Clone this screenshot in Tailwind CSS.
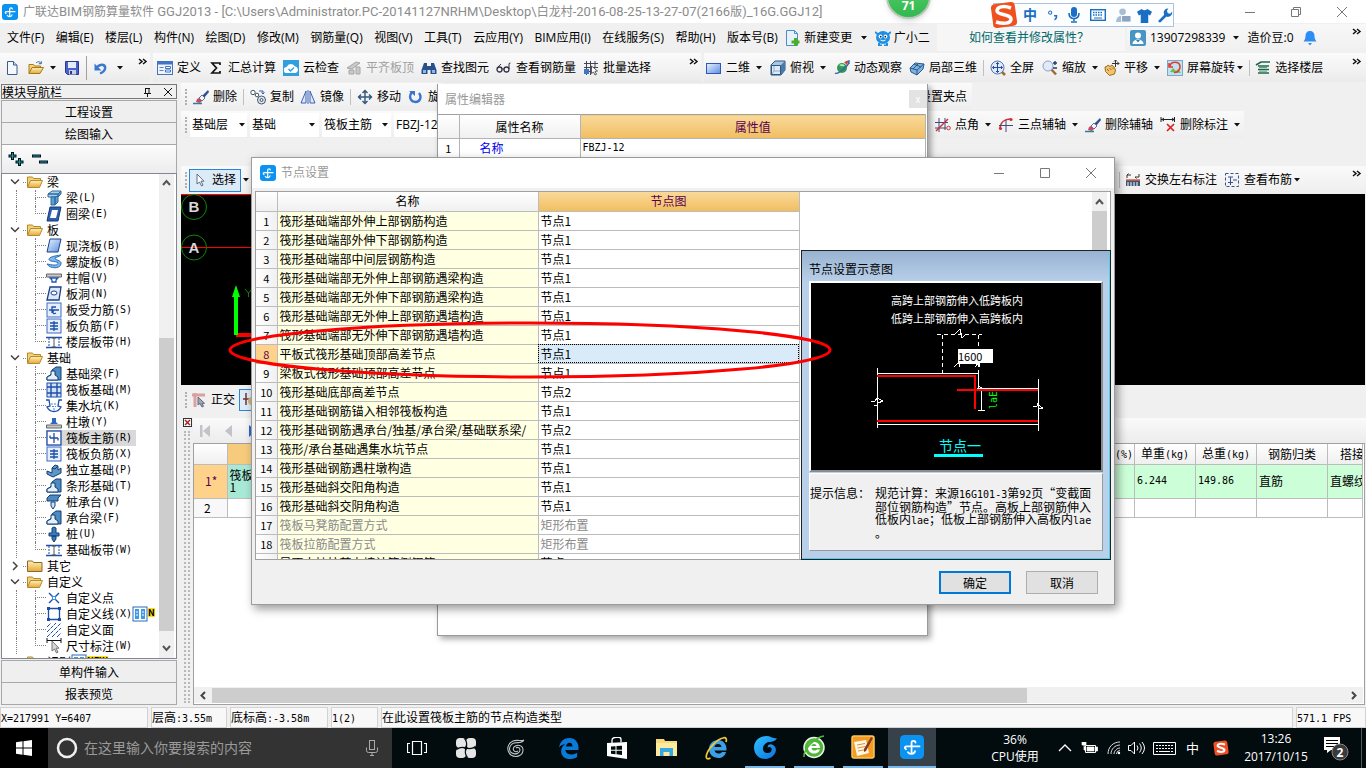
<!DOCTYPE html>
<html lang="zh-CN">
<head>
<meta charset="utf-8">
<title>广联达BIM钢筋算量软件 GGJ2013</title>
<script src="https://cdn.jsdelivr.net/npm/@tailwindcss/browser@4"></script>
</head>
<body class="h-screen overflow-hidden bg-[#f0f0f0] font-['Open_Sans','Noto_Sans_CJK_SC',sans-serif] text-[12px] leading-4 text-black">

<svg class="absolute size-0" aria-hidden="true">
  <defs>
    <linearGradient id="gBlue" x1="0" y1="0" x2="1" y2="1"><stop offset="0" stop-color="#eaf3ff"/><stop offset="1" stop-color="#5b8fe0"/></linearGradient>
    <linearGradient id="gFold" x1="0" y1="0" x2="0" y2="1"><stop offset="0" stop-color="#fff0b4"/><stop offset="1" stop-color="#e3a93c"/></linearGradient>
    <linearGradient id="gOrb" x1="0" y1="0" x2="1" y2="1"><stop offset="0" stop-color="#2ec3ff"/><stop offset="1" stop-color="#0c6fe0"/></linearGradient>
  </defs>
  <symbol id="app" viewBox="0 0 16 16"><rect width="16" height="16" rx="3" fill="#0c93f2"/><path d="M10.300 5C10.300 3.600 7.700 3.300 7.700 5.200V12.500M4 9.500C2.600 8.600 3.200 7.600 4.600 7.600H13M5.300 11.500C6.300 13 9.500 13 10 10.800" fill="none" stroke="#fff" stroke-width="1.200" stroke-linecap="round"/></symbol>
  <symbol id="new" viewBox="0 0 16 16"><path d="M3.500 1.500h6l3.500 3.500v9.500H3.500z" fill="#f4f9ff" stroke="#3f5c86"/><path d="M9.500 1.500V5H13" fill="#c9dcf5" stroke="#3f5c86"/></symbol>
  <symbol id="open" viewBox="0 0 16 16"><path d="M1 13.500v-9h4.500l1 1.500h6v2" fill="#f6d47a" stroke="#a57a1c"/><path d="M1 13.500l3-6h11.500l-3.500 6z" fill="url(#gFold)" stroke="#a57a1c"/><path d="M8 3c2-2 4-1.500 5 .5m.3-2.300v2.500h-2.500" fill="none" stroke="#3a68a8"/></symbol>
  <symbol id="save" viewBox="0 0 16 16"><path d="M1.500 1.500h13v13h-11l-2-2z" fill="#4a62c8" stroke="#283a90"/><path d="M4 2h8v6H4z" fill="#e6ecfa"/><path d="M5 10h7v4.500H5z" fill="#c9cfe4"/><path d="M6 11h2v3H6z" fill="#283a90"/></symbol>
  <symbol id="undo" viewBox="0 0 16 16"><path d="M4 7c5-4 9-2 8 2-.5 2-2.500 3.500-5 4.500" fill="none" stroke="#3b78d0" stroke-width="2.400"/><path d="M1.500 3.500v7h7z" fill="#3b78d0"/></symbol>
  <symbol id="define" viewBox="0 0 16 16"><rect x=".5" y="1.500" width="15" height="13" fill="#eef4fc" stroke="#4774b8"/><path d="M1 2h14v2.500H1z" fill="#3f74c6"/><path d="M2.500 7.500h4m-4 3h4" stroke="#6b84a8"/><path d="M8.500 6.500h5v2h-5zm0 3.500h5v2h-5z" fill="#fff" stroke="#3f74c6"/></symbol>
  <symbol id="sigma" viewBox="0 0 16 16"><path d="M12 5V3H4l4.500 5L4 13h8v-2" fill="none" stroke="#111" stroke-width="1.700"/></symbol>
  <symbol id="cloud" viewBox="0 0 16 16"><rect width="16" height="16" fill="#2f9fe0"/><path d="M4 13a3 3 0 0 1-.3-6A4.500 4.500 0 0 1 12 6.500a3.300 3.300 0 0 1 .3 6.500z" fill="#fff"/><path d="M5.500 9l2 2 3.500-3.500" fill="none" stroke="#2f9fe0" stroke-width="1.400"/></symbol>
  <symbol id="align" viewBox="0 0 16 16"><path d="M1 8l9-6 4 1-8 6zM3 10h5v4H3zM10 7h4v7h-4z" fill="#c9c9c9" stroke="#a6a6a6"/></symbol>
  <symbol id="binoc" viewBox="0 0 16 16"><path d="M3 3h3v3h4V3h3l2.500 7v4H9.500v-4h-3v4H.5v-4z" fill="#28508c"/><path d="M2 10h3v3H2zm9 0h3v3h-3z" fill="#8fb6e8"/></symbol>
  <symbol id="glasses" viewBox="0 0 16 16"><circle cx="3.500" cy="9.500" r="2.500" fill="none" stroke="#334" stroke-width="1.300"/><circle cx="10.500" cy="9.500" r="2.500" fill="none" stroke="#334" stroke-width="1.300"/><path d="M6 9h2M1 8l4-4M13 9V3.500l1.500-.5" stroke="#334" fill="none"/></symbol>
  <symbol id="batch" viewBox="0 0 16 16"><path d="M1 3.500h14M1 7.500h14M1 11.500h7M3.500 1v14M7.500 1v14M12 1v6" stroke="#445"/><path d="M1 9h5v5H1z" fill="#3f74c6"/><path d="M8.500 6l6 5-2.500.3 1.500 3-1.500.7-1.500-3-2 1.500z" fill="#fff" stroke="#333" stroke-width=".8"/></symbol>
  <symbol id="rect" viewBox="0 0 16 16"><rect x=".5" y="3.500" width="14" height="10" fill="url(#gBlue)" stroke="#3156b8"/></symbol>
  <symbol id="cube" viewBox="0 0 16 16"><path d="M1 5l4-4h10v9l-4 5H1z" fill="#a9c6e4" stroke="#2f587f"/><path d="M11 5l4-4v9l-4 5z" fill="#4b7aa8"/><path d="M1.500 5.500h9v9h-9z" fill="#dceafa" stroke="#2f587f"/><path d="M4 6v5h6M4 11l-2 3" fill="none" stroke="#8fb0d0"/></symbol>
  <symbol id="orbit" viewBox="0 0 16 16"><circle cx="8" cy="8" r="5" fill="#2f9a54"/><path d="M5 5c3-2 5-1 6 1-2 0-4 1-6-1z" fill="#a9e6b8"/><path d="M1 13C3 15 14 7 15 2m-3 0l3-1v3" fill="none" stroke="#3a68a8" stroke-width="1.400"/><path d="M10 2l4-1-1 4z" fill="#d23a2a"/></symbol>
  <symbol id="local3d" viewBox="0 0 16 16"><path d="M1 8l5-5 9 1-1 5-6 6-6-3z" fill="#7fb2dc" stroke="#285a8c"/><path d="M1 8l7 2 7-6M8 10v5M5 4l7 3M4 9l5-5" stroke="#285a8c" fill="none"/></symbol>
  <symbol id="full" viewBox="0 0 16 16"><path d="M11 11l4 4" stroke="#a46a35" stroke-width="2.500"/><circle cx="7.500" cy="7.500" r="6.500" fill="#dfeafb" stroke="#5878ac"/><path d="M7.500 2.500v10M2.500 7.500h10M6 4l1.500-1.500L9 4M6 11l1.500 1.500L9 11M4 6L2.500 7.500 4 9M11 6l1.500 1.500L11 9" stroke="#2c4a9c" fill="none"/></symbol>
  <symbol id="zoomi" viewBox="0 0 16 16"><path d="M9 9l5 5.500" stroke="#a46a35" stroke-width="2.500"/><circle cx="6" cy="6" r="5" fill="#dfeafb" stroke="#8aa3c8"/><path d="M13 1v4M11 3h4M11 8h4" stroke="#223c70" stroke-width="1.400"/></symbol>
  <symbol id="pan" viewBox="0 0 16 16"><path d="M1 7l2-.5L4 5l2 1.500L8 5l2 2 1.500 3-1 4-5 1.500-4-4z" fill="#f1c36c" stroke="#9a6b21"/><path d="M3 9l2 2M5.500 8l2 2M8 7.500l1.500 1.500" stroke="#9a6b21"/><path d="M11.500 0v7M8 3.500h7M10 1.500L11.500 0 13 1.500M13.500 2L15 3.500 13.500 5" stroke="#333" fill="none"/></symbol>
  <symbol id="rot" viewBox="0 0 16 16"><rect x=".5" y=".5" width="15" height="15" fill="#bfe3f5" stroke="#78a9c8"/><path d="M3 12l3-4 3 3 2-2 3 4z" fill="#77b84c"/><path d="M3 6c1-5 9-5 10 0 .5 4-3 7-6 6.500M2 3v4h4" fill="none" stroke="#e23b2e" stroke-width="1.500"/></symbol>
  <symbol id="floors" viewBox="0 0 16 16"><path d="M1 5l5-3h9M3 6h11M3 9.500h11M3 13h11" stroke="#26634f" stroke-width="1.700" fill="none"/><path d="M4 7.500h8M4 11.200h8" stroke="#4fae7a"/></symbol>
  <symbol id="brush" viewBox="0 0 16 16"><path d="M15 1l-6 6 2 2 5-6z" fill="#2e4f90"/><path d="M9 6l3 3-3 3-3-3z" fill="#f0f3f9" stroke="#5f7199"/><path d="M6 9l3 3-2 2-4-1 1-3z" fill="#c9485c"/><path d="M0 14.500h9" stroke="#2e7d9c" stroke-width="1.500"/></symbol>
  <symbol id="copy" viewBox="0 0 16 16"><circle cx="3" cy="3.500" r="2.200" fill="#fff" stroke="#456"/><circle cx="7" cy="6" r="1.800" fill="#fff" stroke="#456"/><circle cx="11.500" cy="11" r="4" fill="#e2e9f4" stroke="#456"/><circle cx="11.500" cy="11" r="1.500" fill="none" stroke="#456"/><path d="M9 2h4v3m-1.500-1.500L13 5l1.500-1.500" fill="none" stroke="#2c5fb0"/></symbol>
  <symbol id="mirror" viewBox="0 0 16 16"><path d="M6 2v12H1zM10 2v12h5z" fill="#dbe8fb" stroke="#3a63b4"/><path d="M8 1v14" stroke="#3a63b4"/></symbol>
  <symbol id="move" viewBox="0 0 16 16"><path d="M8 1.500v13M1.500 8h13M5.500 4L8 1.500 10.500 4M5.500 12L8 14.500 10.500 12M4 5.500L1.500 8 4 10.500M12 5.500L14.500 8 12 10.500" fill="none" stroke="#33567f" stroke-width="1.400"/></symbol>
  <symbol id="rotate" viewBox="0 0 16 16"><path d="M4 3C0 8 3 13 7.500 13S14 8 11 4" fill="none" stroke="#3a73d0" stroke-width="2.400"/><path d="M1 2h6v5z" fill="#3a73d0"/></symbol>
  <symbol id="cursor" viewBox="0 0 16 16"><path d="M5 2v10l2.500-2 2 4 1.500-.8-2-4h3z" fill="#fff" stroke="#5c6f86"/></symbol>
  <symbol id="ptang" viewBox="0 0 16 16"><path d="M4 1v14M10 1v12M0 5.500h13M0 11h11" stroke="#3a4a7c"/><path d="M1 14L13 2" stroke="#d23030" stroke-width="1.400"/><circle cx="13.500" cy="11" r="1.800" fill="none" stroke="#d23030"/></symbol>
  <symbol id="pt3" viewBox="0 0 16 16"><path d="M2 12C2 6 6 2 13 2" fill="none" stroke="#d23030" stroke-width="1.500"/><path d="M8 3v12M1 8.500h14" stroke="#3a4a7c"/><circle cx="2.500" cy="11.500" r="1.600" fill="#d23030"/><circle cx="13" cy="2.500" r="1.600" fill="#d23030"/></symbol>
  <symbol id="deldim" viewBox="0 0 16 16"><path d="M1 0v5M14.500 0v5M1 2.500h13M4 1L2 2.500 4 4M12 1l2 1.500L12 4" stroke="#222" fill="none"/><path d="M7 7l7 7M14 7l-7 7" stroke="#e02020" stroke-width="1.700"/></symbol>
  <symbol id="swap" viewBox="0 0 16 16"><path d="M2 6V3h4M3.500 1.500L2 3M14 2v3h-4m1.500 1.500L10 5" fill="none" stroke="#333"/><path d="M1 8h14v6H1z" fill="#3a5578"/><path d="M3 10v4m3-4v4m3-4v4m3-4v4" stroke="#fff"/><path d="M1 8h14" stroke="#e0603c" stroke-width="1.500"/></symbol>
  <symbol id="viewbar" viewBox="0 0 16 16"><path d="M1.500 1.500h13v13h-13z" fill="none" stroke="#345098" stroke-dasharray="3 2"/><path d="M4 5h5M4 10.500h5M6.500 5v8M9 8h4" stroke="#345098" fill="none"/></symbol>
  <symbol id="ortho" viewBox="0 0 16 16"><path d="M1 3h13M4 1v14" stroke="#dca0a0" stroke-width="3"/><path d="M7 5v8l2-1.500L11 15l1.500-.7-1.500-3h2.500z" fill="#9aa8b8" stroke="#667"/></symbol>
  <symbol id="newchg" viewBox="0 0 16 16"><path d="M1.500.5h8l3 3v12h-11z" fill="#e6f1fb" stroke="#4a8fc8"/><path d="M9.500.5v3h3" fill="none" stroke="#4a8fc8"/><path d="M10.500 8v8M6.500 12h8" stroke="#4caf1f" stroke-width="3"/></symbol>
  <symbol id="bot" viewBox="0 0 16 16"><ellipse cx="8" cy="7.500" rx="7" ry="6.500" fill="#1f8fe6"/><path d="M0 2l4 3M16 2l-4 3M4 13v2.500h3M12 13v2.500H9" stroke="#1f8fe6" stroke-width="2" fill="none"/><circle cx="5.500" cy="6.500" r="1.900" fill="#fff"/><circle cx="10.500" cy="6.500" r="1.900" fill="#fff"/><circle cx="5.700" cy="6.700" r=".9" fill="#123"/><circle cx="10.300" cy="6.700" r=".9" fill="#123"/><path d="M5.500 10q2.500 2 5 0" stroke="#fff" fill="none"/></symbol>
  <symbol id="user" viewBox="0 0 16 16"><rect width="16" height="16" rx="2" fill="#4596c4"/><circle cx="8" cy="5.500" r="3" fill="#fff"/><path d="M2.500 14c0-6 11-6 11 0z" fill="#fff"/><path d="M6 10h4l-2 2.500z" fill="#2f78b0"/></symbol>
  <symbol id="bell" viewBox="0 0 16 16"><path d="M8 1c-3 0-4.500 2-4.500 5 0 3-1 4-2 5.500h13c-1-1.500-2-2.500-2-5.500 0-3-1.500-5-4.500-5z" fill="#2e8cf5"/><path d="M6 13h4l-2 2.500z" fill="#2e8cf5"/></symbol>
  <symbol id="dd" viewBox="0 0 6 4"><path d="M0 0h6L3 3.500z" fill="#111"/></symbol>
  <symbol id="chev" viewBox="0 0 10 8"><path d="M1 1l3 2.500L1 6M5 1l3 2.500L5 6" fill="none" stroke="#111" stroke-width="1.500"/></symbol>

  <symbol id="fopen" viewBox="0 0 16 16"><path d="M.5 13V3h5l1 1.500h7V7" fill="#f3d27c" stroke="#b58a2c"/><path d="M.5 13.500L3.500 6.500h12l-3 7z" fill="url(#gFold)" stroke="#b58a2c"/></symbol>
  <symbol id="fclosed" viewBox="0 0 16 16"><path d="M.5 13.500V3h5l1 1.500h8.500v9z" fill="url(#gFold)" stroke="#8a6a24"/></symbol>
  <symbol id="t-beam" viewBox="0 0 16 16"><path d="M2 4l4-3h9l-3 3zM2 4h10v3H2z" fill="#a8d2ec" stroke="#2a6aa0"/><path d="M5 7h4v8H5zM12 4l3-3v3l-3 3zM9 7l3-1v6l-3 3z" fill="#5d9fd0" stroke="#2a6aa0"/></symbol>
  <symbol id="t-ring" viewBox="0 0 16 16"><path d="M4 1h11l-3 14H1z" fill="#2e5fae" stroke="#16397a"/><path d="M6 4h6l-2 8H4z" fill="#fff"/></symbol>
  <symbol id="t-slab" viewBox="0 0 16 16"><path d="M4 1h11l-3 13H1z" fill="url(#gBlue)" stroke="#1c3f88"/></symbol>
  <symbol id="t-spiral" viewBox="0 0 16 16"><path d="M15 1C8 2 3 3 3 5.500S13 7 12 9.500 6 11 1 10c3 5 13 5 14 0 1-4-7-4-6-6 1-1 4-1 6-3z" fill="#7fb8ea" stroke="#2a6ab8"/></symbol>
  <symbol id="t-cap" viewBox="0 0 16 16"><path d="M.5 4h15v3H.5z" fill="#c8c8c8" stroke="#666"/><path d="M4 8h8l-2 2v2H6v-2z" fill="#fff" stroke="#2456b0" stroke-width="1.300"/></symbol>
  <symbol id="t-hole" viewBox="0 0 16 16"><path d="M4 1h11l-2 13H1z" fill="#dce9fc" stroke="#1c3f88" stroke-width="1.300"/><ellipse cx="8" cy="7" rx="3" ry="2" fill="#fff" stroke="#1c3f88"/></symbol>
  <symbol id="t-bars" viewBox="0 0 16 16"><rect x="1" y="1" width="14" height="14" fill="#e4eefc" stroke="#3c6cc0"/><path d="M3 8h10M6 11V5h4M10 11c-3 2-4-1-2-3" fill="none" stroke="#1c4ea8" stroke-width="1.300"/></symbol>
  <symbol id="t-neg" viewBox="0 0 16 16"><rect x="1" y="1" width="14" height="14" fill="#e4eefc" stroke="#3c6cc0"/><path d="M4 5h8M4 11h8M8 3v10M4 8h8" fill="none" stroke="#1c4ea8" stroke-width="1.300"/></symbol>
  <symbol id="t-band" viewBox="0 0 16 16"><path d="M0 3.500h16M0 13.500h16" stroke="#1c4ea8" stroke-width="1.400"/><path d="M3 4v9M13 4v9" stroke="#1c4ea8" stroke-dasharray="2 1"/><path d="M6 4h4M8 4v9M6 13h4" stroke="#555"/></symbol>
  <symbol id="t-fbeam" viewBox="0 0 16 16"><path d="M1 14V11l5-3V4l4-3h5v13z" fill="#4c8abf" stroke="#123f78"/><path d="M1 14v-3l4-2V5h4v4l3 2v3z" fill="#e6f0fb" stroke="#123f78"/></symbol>
  <symbol id="t-raft" viewBox="0 0 16 16"><rect x="1" y="1" width="14" height="14" fill="#cfe0f8" stroke="#1c4ea8"/><path d="M5 1v14M11 1v14M1 5h14M1 11h14" stroke="#1c4ea8" stroke-width="1.400"/></symbol>
  <symbol id="t-pit" viewBox="0 0 16 16"><path d="M0 2h3l1 6-3 1c3 6 11 6 14 0l-3-1 1-6h3" fill="none" stroke="#1c4ea8" stroke-width="1.300"/><path d="M5 6h6M6 8.500h4M7 11h2" stroke="#3c8ad8" stroke-dasharray="2 1"/></symbol>
  <symbol id="t-pier" viewBox="0 0 16 16"><path d="M.5 11h15v3H.5z" fill="#c8c8c8" stroke="#666"/><path d="M4 10l2-2V4h4v4l2 2z" fill="#2f66c0"/></symbol>
  <symbol id="t-main" viewBox="0 0 16 16"><rect x="1" y="1" width="14" height="14" fill="#fff" stroke="#1c4ea8" stroke-width="1.300"/><path d="M8 3v10M4 8h8M4 5.500V8M12 8v2.500" stroke="#1c4ea8" stroke-width="1.300"/></symbol>
  <symbol id="t-iso" viewBox="0 0 16 16"><path d="M1 9l5 2V6l3-3 3 1v4l3-2v5l-8 4-6-3z" fill="#5f97c8" stroke="#123f78"/><path d="M6 6l3 1 3-3" stroke="#123f78" fill="none"/></symbol>
  <symbol id="t-pcap" viewBox="0 0 16 16"><path d="M1 4l3-3h11l-3 3v3H1z" fill="#4c8abf" stroke="#123f78"/><path d="M5 8h4v4l-2 3-2-3z" fill="#cfe3f6" stroke="#123f78"/></symbol>
  <symbol id="t-pile" viewBox="0 0 16 16"><path d="M6 2l2-1 2 1v5h3v3H3V7h3zM6 10h4v3l-2 3-2-3z" fill="#3d7ab8" stroke="#123f78"/></symbol>
  <symbol id="t-point" viewBox="0 0 16 16"><path d="M3 3l10 10M13 3L3 13" stroke="#1c4ea8" stroke-width="1.400"/><rect x="6.500" y="6.500" width="3" height="3" fill="#fff" stroke="#3c8ad8"/></symbol>
  <symbol id="t-line" viewBox="0 0 16 16"><path d="M2.500 2.500h11v11h-11z" fill="none" stroke="#1c4ea8" stroke-width="1.300"/><path d="M1 1h3v3H1zM12 1h3v3h-3zM1 12h3v3H1zM12 12h3v3h-3z" fill="#1c4ea8"/></symbol>
  <symbol id="t-hatch" viewBox="0 0 16 16"><path d="M1 5l4-4M1 10l9-9M1 15L15 1M6 15l9-9M11 15l4-4" stroke="#1c4ea8" stroke-dasharray="4 1"/></symbol>
  <symbol id="t-dim" viewBox="0 0 16 16"><path d="M1 0v5M15 0v5M1 2.500h14" stroke="#111"/><path d="M6 3v10l2.500-2 2 4 1.500-.8-2-4h3z" fill="#d8d8d8" stroke="#777"/></symbol>
  <symbol id="book" viewBox="0 0 16 16"><rect x="1" y="1" width="14" height="14" fill="#fff" stroke="#2a6ab8"/><path d="M3 3h4v10H3zM9 3h4v10H9z" fill="#3c9ae8"/><path d="M4 6h2m-2 3h2m4-3h2m-2 3h2" stroke="#fff"/></symbol>
</svg>

<div class="relative flex h-full flex-col overflow-hidden">

  <!-- title bar -->
  <header class="flex h-[23px] shrink-0 items-center bg-white pl-[2px] text-[#8c8c8c]">
    <svg class="mr-[5px] size-4"><use href="#app"/></svg>
    <h1 class="whitespace-nowrap font-[Roboto,'Noto_Sans_CJK_SC',sans-serif] text-[13px]"><span class="text-[12px]">广联达</span>BIM<span class="text-[12px]">钢筋算量软件</span> GGJ2013 - [C:\Users\Administrator.PC-20141127NRHM\Desktop\<span class="text-[12px]">白龙村</span>-2016-08-25-13-27-07(2166<span class="text-[12px]">版</span>)_16G.GGJ12]</h1>
    <div class="ml-auto flex gap-9 pr-[19px]">
      <button aria-label="最小化"><svg class="size-[10px]" viewBox="0 0 10 10"><path d="M0 5.500h10" stroke="#777"/></svg></button>
      <button aria-label="还原"><svg class="size-[10px]" viewBox="0 0 10 10"><path d="M.5 2.500h7v7h-7zM2.500 2.500v-2h7v7h-2" fill="none" stroke="#777"/></svg></button>
      <button aria-label="关闭"><svg class="size-[10px]" viewBox="0 0 10 10"><path d="M0 0l10 10M10 0L0 10" stroke="#777"/></svg></button>
    </div>
  </header>

  <!-- menu bar -->
  <div class="flex h-[29px] shrink-0 items-center">
    <nav class="flex w-[930px] shrink-0 items-center justify-between whitespace-nowrap pl-[7px]">
      <button>文件(F)</button><button>编辑(E)</button><button>楼层(L)</button><button>构件(N)</button><button>绘图(D)</button><button>修改(M)</button><button>钢筋量(Q)</button><button>视图(V)</button><button>工具(T)</button><button>云应用(Y)</button><button>BIM应用(I)</button><button>在线服务(S)</button><button>帮助(H)</button><button class="-mr-1">版本号(B)</button>
      <button class="-mr-1 flex items-center gap-[3px]"><svg class="size-4"><use href="#newchg"/></svg>新建变更<svg class="ml-[6px] h-1 w-[6px]"><use href="#dd"/></svg></button>
      <button class="flex items-center gap-[3px]"><svg class="size-4"><use href="#bot"/></svg>广小二</button>
    </nav>
    <a href="#" class="ml-[7px] flex h-[27px] w-[188px] shrink-0 items-center bg-[#f6f6f6] pl-8 text-[#00696b]">如何查看并修改属性？</a>
    <div class="ml-[2px] flex h-[27px] flex-1 items-center bg-linear-to-b from-[#f8f8f8] to-[#f0f0f0] pl-[3px]">
      <svg class="mr-1 size-4"><use href="#user"/></svg><button class="flex items-center">13907298339<svg class="ml-2 h-1 w-[6px]"><use href="#dd"/></svg></button>
      <span class="ml-2">造价豆:0</span><svg class="ml-2 size-4"><use href="#bell"/></svg>
      <svg class="mb-3 mr-[4px] ml-auto h-2 w-[10px]"><use href="#chev"/></svg>
    </div>
  </div>

  <!-- main toolbar -->
  <div class="flex h-[31px] shrink-0 items-center gap-[3px] whitespace-nowrap">
    <div class="flex h-[29px] w-[150px] shrink-0 items-center bg-linear-to-b from-[#fbfbfb] to-[#ebebeb] pl-1">
      <button aria-label="新建"><svg class="size-4"><use href="#new"/></svg></button>
      <button aria-label="打开" class="ml-2 flex items-center"><svg class="size-4"><use href="#open"/></svg><svg class="ml-[6px] h-1 w-[6px]"><use href="#dd"/></svg></button>
      <button aria-label="保存" class="ml-2"><svg class="size-4"><use href="#save"/></svg></button>
      <span class="ml-[6px] h-6 w-px bg-[#a0a0a0]"></span>
      <button aria-label="撤销" class="ml-[6px] flex items-center"><svg class="size-4"><use href="#undo"/></svg><svg class="ml-2 h-1 w-[6px]"><use href="#dd"/></svg></button>
      <svg class="mb-3 ml-auto mr-[2px] h-2 w-[10px]"><use href="#chev"/></svg>
    </div>
    <div class="flex h-[29px] w-[548px] shrink-0 items-center gap-[7px] bg-linear-to-b from-[#fbfbfb] to-[#ebebeb] pl-1">
      <button class="flex items-center gap-1"><svg class="size-4"><use href="#define"/></svg>定义</button>
      <button class="flex items-center gap-1"><svg class="size-4"><use href="#sigma"/></svg>汇总计算</button>
      <button class="flex items-center gap-1"><svg class="size-4"><use href="#cloud"/></svg>云检查</button>
      <button class="flex items-center gap-1 text-[#a0a0a0]"><svg class="size-4"><use href="#align"/></svg>平齐板顶</button>
      <button class="flex items-center gap-1"><svg class="size-4"><use href="#binoc"/></svg>查找图元</button>
      <button class="flex items-center gap-1"><svg class="size-4"><use href="#glasses"/></svg>查看钢筋量</button>
      <button class="flex items-center gap-1"><svg class="size-4"><use href="#batch"/></svg>批量选择</button>
      <svg class="mb-3 ml-auto mr-[2px] h-2 w-[10px]"><use href="#chev"/></svg>
    </div>
    <div class="flex h-[29px] flex-1 items-center gap-2 bg-linear-to-b from-[#fbfbfb] to-[#ebebeb] pl-[2px]">
      <button class="flex items-center gap-1"><svg class="size-4"><use href="#rect"/></svg>二维<svg class="ml-[2px] h-1 w-[6px]"><use href="#dd"/></svg></button>
      <button class="flex items-center gap-1"><svg class="size-4"><use href="#cube"/></svg>俯视<svg class="ml-[2px] h-1 w-[6px]"><use href="#dd"/></svg></button>
      <button class="flex items-center gap-1"><svg class="size-4"><use href="#orbit"/></svg>动态观察</button>
      <button class="-ml-px flex items-center gap-1"><svg class="size-4"><use href="#local3d"/></svg>局部三维</button>
      <span class="-mx-[2px] h-4 w-px bg-[#c0c0c0]"></span>
      <button class="flex items-center gap-1"><svg class="size-4"><use href="#full"/></svg>全屏</button>
      <button class="flex items-center gap-1"><svg class="size-4"><use href="#zoomi"/></svg>缩放<svg class="ml-[2px] h-1 w-[6px]"><use href="#dd"/></svg></button>
      <button class="-ml-[2px] flex items-center gap-1"><svg class="size-4"><use href="#pan"/></svg>平移<svg class="ml-[2px] h-1 w-[6px]"><use href="#dd"/></svg></button>
      <button class="-ml-px flex items-center gap-1"><svg class="size-4"><use href="#rot"/></svg>屏幕旋转<svg class="-ml-[2px] h-1 w-[6px]"><use href="#dd"/></svg></button>
      <span class="-mx-[2px] h-4 w-px bg-[#c0c0c0]"></span>
      <button class="-ml-px flex items-center gap-1"><svg class="size-4"><use href="#floors"/></svg>选择楼层</button>
      <svg class="mb-3 ml-auto mr-[4px] h-2 w-[10px]"><use href="#chev"/></svg>
    </div>
  </div>

  <div class="flex min-h-0 flex-1">
    <!-- module navigation -->
    <aside class="flex w-[177px] shrink-0 flex-col pl-px pt-px font-['Noto_Sans_CJK_SC',sans-serif]">
      <div class="flex h-[15px] shrink-0 items-center border border-[#777] leading-3"><span>模块导航栏</span>
        <button aria-label="固定" class="ml-auto mr-3"><svg class="h-[10px] w-[9px]" viewBox="0 0 9 10"><path d="M2.500 1v5M6 1v5M1 6.500h7M4.500 7v3M2 1.500h5" stroke="#111" fill="none"/></svg></button>
        <button aria-label="关闭" class="mr-1"><svg class="size-2" viewBox="0 0 8 8"><path d="M0 0l8 8M8 0L0 8" stroke="#111"/></svg></button>
      </div>
      <button class="mt-px h-[23px] shrink-0 border border-[#a8a8a8] bg-[#efefef]">工程设置</button>
      <button class="-mt-px h-[23px] shrink-0 border border-[#a8a8a8] bg-[#efefef]">绘图输入</button>
      <div class="flex h-[28px] shrink-0 items-center gap-2 border-x border-[#a8a8a8] bg-linear-to-b from-[#fcfcfc] to-[#ececec] pl-[6px]">
        <button aria-label="全部展开"><svg class="size-4" viewBox="0 0 16 16"><path d="M4.500 1v8M.5 5h8M11.500 7v8M7.500 11h8" stroke="#012" stroke-width="3"/><path d="M4.500 2v6M1.500 5h6M11.500 8v6M8.500 11h6" stroke="#1a9a96"/></svg></button>
        <button aria-label="全部折叠"><svg class="size-4" viewBox="0 0 16 16"><path d="M0 5h9M7 11h9" stroke="#012" stroke-width="3"/><path d="M1 5h7M8 11h7" stroke="#1a9a96"/></svg></button>
      </div>
      <div class="flex min-h-0 flex-1 border border-[#828790] bg-white">
        <ul id="tree" class="min-w-0 flex-1 overflow-hidden pl-[2px]"></ul>
        <div class="mr-[2px] flex w-[15px] shrink-0 flex-col items-center bg-[#f0f0f0]">
          <svg class="my-[5px] h-[7px] w-[9px] shrink-0" viewBox="0 0 9 7"><path d="M1 6l3.500-4L8 6" fill="none" stroke="#555" stroke-width="2"/></svg>
          <div class="mt-[147px] w-full flex-1 bg-[#cdcdcd]"></div>
          <svg class="mb-[6px] mt-[14px] h-[7px] w-[9px] shrink-0" viewBox="0 0 9 7"><path d="M1 1l3.500 4L8 1" fill="none" stroke="#555" stroke-width="2"/></svg>
        </div>
      </div>
      <button class="mt-px h-[23px] shrink-0 border border-[#a8a8a8] bg-[#efefef]">单构件输入</button>
      <button class="-mt-px mb-[2px] h-[23px] shrink-0 border border-[#a8a8a8] bg-[#efefef]">报表预览</button>
    </aside>

    <!-- drawing area -->
    <main class="flex min-w-0 flex-1 flex-col pl-1">
      <div class="flex h-[27px] w-[791px] shrink-0 items-center gap-[7px] whitespace-nowrap bg-linear-to-b from-[#fafafa] to-[#eeeeee] pl-1">
        <span class="-mr-px h-4 border-l-2 border-dotted border-[#b0b0b0]"></span>
        <button class="flex items-center gap-1"><svg class="size-4"><use href="#brush"/></svg>删除</button>
        <span class="-mx-px h-4 w-px bg-[#c0c0c0]"></span>
        <button class="-mr-px flex items-center gap-1"><svg class="size-4"><use href="#copy"/></svg>复制</button>
        <button class="flex items-center gap-1"><svg class="size-4"><use href="#mirror"/></svg>镜像</button>
        <span class="-mx-px h-4 w-px bg-[#c0c0c0]"></span>
        <button class="flex items-center gap-1"><svg class="size-4"><use href="#move"/></svg>移动</button>
        <button class="flex items-center gap-1"><svg class="size-4"><use href="#rotate"/></svg>旋转</button>
        <button class="ml-auto mr-[5px]">设置夹点</button>
      </div>
      <div class="mt-px flex h-[27px] w-[1063px] shrink-0 items-center whitespace-nowrap bg-linear-to-b from-[#fafafa] to-[#eeeeee] pl-1">
        <span class="mr-[3px] h-4 border-l-2 border-dotted border-[#b0b0b0]"></span>
        <div class="flex h-6 w-[57px] items-center bg-white pl-[2px]"><select aria-label="楼层" class="w-full appearance-none bg-transparent"><option>基础层</option></select><svg class="mr-[2px] h-1 w-[6px] shrink-0"><use href="#dd"/></svg></div>
        <div class="ml-[3px] flex h-6 w-[69px] items-center bg-white pl-[2px]"><select aria-label="构件类别" class="w-full appearance-none bg-transparent"><option>基础</option></select><svg class="mr-1 h-1 w-[6px] shrink-0"><use href="#dd"/></svg></div>
        <div class="ml-[3px] flex h-6 w-[69px] items-center bg-white pl-[2px]"><select aria-label="构件类型" class="w-full appearance-none bg-transparent"><option>筏板主筋</option></select><svg class="mr-[3px] h-1 w-[6px] shrink-0"><use href="#dd"/></svg></div>
        <div class="ml-[3px] flex h-6 w-[69px] items-center bg-white pl-[2px]"><select aria-label="构件" class="w-full appearance-none bg-transparent"><option>FBZJ-12</option></select></div>
        <div class="ml-auto flex items-center gap-[7px] pr-1">
          <button class="flex items-center gap-1"><svg class="size-4"><use href="#ptang"/></svg>点角<svg class="ml-[2px] h-1 w-[6px]"><use href="#dd"/></svg></button>
          <button class="flex items-center gap-1"><svg class="size-4"><use href="#pt3"/></svg>三点辅轴<svg class="ml-[2px] h-1 w-[6px]"><use href="#dd"/></svg></button>
          <button class="flex items-center gap-1"><svg class="size-4"><use href="#brush"/></svg>删除辅轴</button>
          <button class="flex items-center gap-1"><svg class="size-4"><use href="#deldim"/></svg>删除标注<svg class="ml-[2px] h-1 w-[6px]"><use href="#dd"/></svg></button>
        </div>
      </div>
      <div class="mt-[28px] flex h-[28px] shrink-0 items-center whitespace-nowrap bg-linear-to-b from-[#fafafa] to-[#eeeeee] pl-1">
        <span class="mr-[2px] h-4 border-l-2 border-dotted border-[#b0b0b0]"></span>
        <button class="flex h-[23px] w-[52px] items-center gap-1 border border-[#2a84d8] bg-[#dcebf8] pl-[2px]"><svg class="size-4"><use href="#cursor"/></svg>选择</button>
        <svg class="ml-[2px] h-1 w-[6px]"><use href="#dd"/></svg>
        <div class="ml-auto flex w-[247px] items-center gap-[7px]">
          <span class="-mr-[2px] h-4 w-px bg-[#c0c0c0]"></span>
          <button class="flex items-center gap-1"><svg class="size-4"><use href="#swap"/></svg>交换左右标注</button>
          <button class="flex items-center gap-1"><svg class="size-4"><use href="#viewbar"/></svg>查看布筋<svg class="-ml-[2px] h-1 w-[6px]"><use href="#dd"/></svg></button>
          <svg class="mb-3 ml-auto mr-[4px] h-2 w-[10px]"><use href="#chev"/></svg>
        </div>
      </div>
      <div class="mr-px h-[191px] shrink-0 overflow-hidden bg-black">
        <svg class="h-full w-[256px]" viewBox="0 0 256 191" font-family="Liberation Sans" font-size="15" font-weight="bold">
          <path d="M0 .5h256M0 53.500h256" stroke="#f00"/>
          <g fill="none" stroke="#0a8a0a"><circle cx="13" cy="13" r="12.500"/><circle cx="13" cy="53.500" r="12.500"/></g>
          <g fill="#d8d8d8" text-anchor="middle"><text x="13" y="18">B</text><text x="13" y="59">A</text></g>
          <path d="M55 141h200" stroke="#f00" stroke-width="4"/>
          <path d="M55 141V98" stroke="#0f0" stroke-width="4"/><path d="M55 91l-4 12h8z" fill="#0f0"/>
          <path d="M64 95l3.500 4 3.500-4M67.500 99v4" stroke="#0a8a0a" fill="none"/>
        </svg>
      </div>
      <div class="flex h-[30px] shrink-0 items-center pl-1">
        <span class="mr-1 h-4 border-l-2 border-dotted border-[#b0b0b0]"></span>
        <button class="flex items-center gap-1"><svg class="size-4"><use href="#ortho"/></svg>正交</button>
        <button aria-label="对象捕捉" class="ml-1 size-[22px] border border-[#2a84d8] bg-[#dcebf8] pl-[2px]"><svg class="size-4" viewBox="0 0 16 16"><path d="M4 1v12M1 7h6" stroke="#7a3030" stroke-width="1.500"/><circle cx="10" cy="9" r="4" fill="#c8b87c"/></svg></button>
      </div>

      <div class="flex min-h-0 flex-1">
        <div class="flex w-[12px] shrink-0 flex-col items-center pb-1 pt-[3px]">
          <svg class="size-[9px] shrink-0" viewBox="0 0 9 9"><rect x=".5" y=".5" width="8" height="8" fill="#fff" stroke="#333"/><path d="M2 2l5 5M7 2L2 7" stroke="#a22" stroke-width="1.500"/></svg>
          <div class="mt-1 w-[6px] flex-1 border-x-2 border-dotted border-[#b8b8b8]"></div>
        </div>
        <div class="flex min-w-0 flex-1 flex-col pt-[3px]">
          <div class="flex h-[25px] shrink-0 items-center gap-3 bg-linear-to-b from-[#fafafa] to-[#ececec] pl-[6px]">
            <button aria-label="首条"><svg class="size-3" viewBox="0 0 12 12"><path d="M1 0h2.500v12H1zM11 0v12L4 6z" fill="#c0c4c8"/></svg></button>
            <button aria-label="上一条"><svg class="size-3" viewBox="0 0 12 12"><path d="M9 0v12L2 6z" fill="#c0c4c8"/></svg></button>
            <button aria-label="下一条"><svg class="size-3" viewBox="0 0 12 12"><path d="M2 0v12l7-6z" fill="#2f66d0"/></svg></button>
          </div>
          <div class="mr-px flex min-h-0 flex-1 flex-col border border-[#a0a0a0] bg-white pr-px">
            <table class="w-full table-fixed border-collapse font-['Noto_Sans_CJK_SC',sans-serif] leading-3">
              <colgroup><col class="w-[33px]"><col class="w-[100px]"><col><col class="w-[61px]"><col class="w-[61px]"><col class="w-[71px]"><col class="w-[35px]"></colgroup>
              <thead><tr class="h-[20px] whitespace-nowrap bg-linear-to-b from-white to-[#efefef] [&>th]:border-r [&>th]:border-b [&>th]:border-[#bcbcbc] [&>th]:font-normal">
                <th></th><th class="bg-[#f6cb7d]">筋号</th><th class="pr-px text-right">损耗<span class="font-['DejaVu_Sans_Mono'] text-[10px]">(%)</span></th><th>单重<span class="font-['DejaVu_Sans_Mono'] text-[10px]">(kg)</span></th><th>总重<span class="font-['DejaVu_Sans_Mono'] text-[10px]">(kg)</span></th><th>钢筋归类</th><th class="overflow-hidden border-r-0 pl-3 text-left">搭接形式</th></tr></thead>
              <tbody class="[&_td]:border-r [&_td]:border-b [&_td]:border-[#bcbcbc] [&_td]:pl-[2px]">
                <tr class="h-[34px] bg-[#ccffd8]"><td class="bg-[#ffd28c] text-center text-[#5a0050]">1*</td><td class="bg-[#a8e9d6]">筏板主筋.<br>1</td><td></td><td class="font-['DejaVu_Sans_Mono'] text-[10px]">6.244</td><td class="font-['DejaVu_Sans_Mono'] text-[10px]">149.86</td><td>直筋</td><td class="overflow-hidden whitespace-nowrap border-r-0">直螺纹连接</td></tr>
                <tr class="h-[19px]"><td class="bg-[#f8f8f8] pr-2 text-center">2</td><td></td><td></td><td></td><td></td><td></td><td></td></tr>
              </tbody>
            </table>
            <div class="mb-px mt-auto flex h-[16px] items-center bg-[#f0f0f0] px-[6px]">
              <svg class="mr-[6px] h-[9px] w-[6px] shrink-0" viewBox="0 0 6 9"><path d="M5 1L1.500 4.500 5 8" fill="none" stroke="#444" stroke-width="2"/></svg>
              <div class="h-[15px] w-[70.400%] bg-[#cdcdcd]"></div>
              <svg class="ml-auto h-[9px] w-[6px] shrink-0" viewBox="0 0 6 9"><path d="M1 1l3.500 3.500L1 8" fill="none" stroke="#444" stroke-width="2"/></svg>
            </div>
          </div>
          <div class="h-[2px] shrink-0"></div>
        </div>
      </div>
    </main>
  </div>

  <!-- status bar -->
  <footer class="flex h-[21px] shrink-0 gap-[3px] whitespace-nowrap font-['Noto_Sans_CJK_SC',sans-serif] [&>div]:border [&>div]:border-[#d2d2d2] [&>div]:bg-[#f8f8f8] [&>div]:leading-[18px] [&_span]:font-['DejaVu_Sans_Mono'] [&_span]:text-[10px]">
    <div class="w-[148px]"><span>X=217991 Y=6407</span></div>
    <div class="w-[76px]">层高<span>:3.55m</span></div>
    <div class="w-[98px]">底标高<span>:-3.58m</span></div>
    <div class="w-[47px]"><span>1(2)</span></div>
    <div class="flex-1">在此设置筏板主筋的节点构造类型</div>
    <div class="w-[70px]"><span>571.1 FPS</span></div>
  </footer>

  <!-- Windows taskbar -->
  <div class="flex h-[40px] shrink-0 items-stretch bg-[#020b0e] text-white">
    <button aria-label="开始" class="grid w-[48px] place-items-center bg-black"><svg class="size-4" viewBox="0 0 16 16"><path d="M0 2.300L6.500 1.300V7.600H0zM7.500 1.200L16 0v7.600H7.500zM0 8.500h6.500v6.200L0 13.800zM7.500 8.500H16V16l-8.500-1.200z" fill="#fff"/></svg></button>
    <label class="flex w-[344px] shrink-0 items-center bg-[#333] pl-2"><svg class="size-[22px] shrink-0" viewBox="0 0 22 22"><circle cx="11" cy="11" r="9" fill="none" stroke="#f0f0f0" stroke-width="2.500"/></svg>
      <input aria-label="搜索" placeholder="在这里输入你要搜索的内容" class="ml-[6px] w-[270px] bg-transparent text-[14px] placeholder:text-[#9a9a9a]">
      <svg class="ml-[12px] h-[16px] w-[12px]" viewBox="0 0 12 16"><rect x="3.500" y=".5" width="5" height="9" fill="none" stroke="#aaa"/><path d="M.5 7.500v3q0 2 2 2h7q2 0 2-2v-3M6 12.500V16M4 15.500h4" fill="none" stroke="#aaa"/></svg></label>
    <button aria-label="任务视图" class="grid w-[49px] place-items-center"><svg class="h-4 w-5" viewBox="0 0 20 16"><path d="M5.500 1.500h9v13h-9zM3 3.500H.5v9H3M17 3.500h2.500v9H17" fill="none" stroke="#fff" stroke-width="1.200"/></svg></button>
    <button aria-label="四叶草" class="grid w-[49px] place-items-center"><svg class="size-[22px]" viewBox="0 0 22 22"><g fill="#e6e6e6"><rect x="1" y="1" width="10" height="10" rx="4"/><rect x="11" y="1" width="10" height="10" rx="4"/><rect x="1" y="11" width="10" height="10" rx="4"/><rect x="11" y="11" width="10" height="10" rx="4"/></g><path d="M9.500 1.500Q13 6 11 11T12.500 20.500M1.500 12.500Q6 9 11 11T20.500 9.500" fill="none" stroke="#020b0e" stroke-width="1.200"/></svg></button>
    <button aria-label="旋风" class="grid w-[50px] place-items-center"><svg class="size-5" viewBox="0 0 20 20"><path d="M19 2c-3 2-6-1-11 1-6 3-7 10-2 14 5 3 12 1 12-5 0-5-6-6-9-3-2 3 1 6 4 4M19 2c-2 4-7 2-10 3-5 2-6 8-2 10 4 2 8 0 8-3s-3-3-4-2" fill="none" stroke="#bfc5c6" stroke-width="1.100"/></svg></button>
    <button aria-label="Edge" class="grid w-[57px] place-items-center"><svg class="size-[21px]" viewBox="0 0 20 20"><path d="M1 9C2 3 6 0 11 0c5 0 8.500 4 8.500 9v2.500H7c.3 3 2.800 4.200 5.500 4.200 2 0 4-.6 5.700-1.700v4C16 19.300 14 20 11.500 20 6.500 20 3 17 3 12.500 3 9.500 4.500 7.500 7 6 4.500 6.200 2.500 7 1 9zm6.500-.8h6.300C13.800 5.800 12.800 4.500 11 4.500S8 6 7.500 8.200z" fill="#0a7ad8"/></svg></button>
    <button aria-label="应用商店" class="grid w-[40px] place-items-center"><svg class="size-[22px]" viewBox="0 0 22 22"><path d="M1 6l20-1v17L1 19z" fill="#fff"/><path d="M6 6V3q0-2 2.500-2.500L12 0q3 0 3 2.500V5" fill="none" stroke="#fff" stroke-width="1.300"/><path d="M5 9.500l4.500-.3v3.500H5zM10.500 9l5.500-.3v4h-5.500zM5 13.700h4.500v3.500L5 16.700zM10.500 13.700H16V18l-5.500-.7z" fill="#020b0e"/></svg></button>
    <button aria-label="文件资源管理器" class="grid w-[60px] place-items-center"><svg class="size-[22px]" viewBox="0 0 22 22"><path d="M0 2h8l1 2h12v15H0z" fill="#f8d978"/><path d="M0 6h21v13H0z" fill="#fde9a0"/><path d="M4 19v-8h13v8h-3.500v-4h-6v4z" fill="#35a8e0"/></svg></button>
    <button aria-label="Internet Explorer" class="grid w-[39px] place-items-center"><svg class="size-[24px]" viewBox="0 0 24 24"><path d="M4 13c0-5 4-9 9-9s8.500 4 8.500 9v1.500H9.500c.5 2 2 3 4 3 1.500 0 2.500-.5 3.500-1.500h4c-1 4-4 6-7.500 6-5.500 0-9.500-4-9.500-9zm5.500-2h7c-.3-2-1.500-3-3.500-3s-3.200 1-3.500 3z" fill="#3c9fe8"/><path d="M21 6c1-3 0-5-3-4C12 3 3 13 1.500 19c-1 4 1 4.500 4 3" fill="none" stroke="#f0c830" stroke-width="1.700"/></svg></button>
    <button aria-label="广联达" class="ml-[9px] grid w-[40px] place-items-center border-b-2 border-[#76b9ed]"><svg class="size-[25px]" viewBox="0 0 24 24"><path d="M23 3c-2 4-6 3-9 4-5 2-6 8-2 10 3 1 6 0 6-3s-3-3-4-2c0-3 3-4 6-2 5 4 0 13-8 13C5 23 1 18 1 12 1 5 7 1 13 1c4 0 7 3 10 2z" fill="url(#gOrb)"/></svg></button>
    <button aria-label="浏览器" class="ml-[9px] grid w-[40px] place-items-center border-b-2 border-[#76b9ed]"><svg class="size-[24px]" viewBox="0 0 24 24"><circle cx="12" cy="12.500" r="10" fill="#50b53a" stroke="#e6f5e0" stroke-width="1.500"/><path d="M6 13c0-4 3-6 6-6s6 2 6 6H9.500c.3 2 1.500 2.500 3 2.500 1.200 0 2-.3 2.500-1h3c-1 2.500-3 4-5.500 4C9 18.500 6 16.500 6 13zm3.500-2h5c-.2-1.200-1-2-2.500-2s-2.300.8-2.500 2z" fill="#fff"/><path d="M2 22C1 14 14 2 22 1" stroke="#50b53a" stroke-width="1.500" fill="none"/></svg></button>
    <button aria-label="记事" class="ml-[9px] grid w-[40px] place-items-center border-b-2 border-[#76b9ed]"><svg class="size-[24px]" viewBox="0 0 24 24"><rect x="1" y="1" width="22" height="22" rx="2" fill="#f59a23" stroke="#f8c85c" stroke-width="1.500"/><path d="M3 7l12-2 3 13-12 3z" fill="#fff8e8"/><path d="M6 10l8-1.500M6.500 13l8-1.500M7 16l8-1.500" stroke="#e09030"/><path d="M20 2l2 1-7 13-2 1v-3z" fill="#8a3a1c"/></svg></button>
    <button aria-label="钢筋算量" class="ml-[5px] grid w-[48px] place-items-center border-b-2 border-[#76b9ed] bg-[#36414a]"><svg class="size-[24px]"><use href="#app"/></svg></button>
    <div class="ml-auto flex items-center">
      <p class="w-[60px] text-center leading-[17px]">36%<br>CPU使用</p>
      <svg class="ml-[13px] h-[8px] w-[14px]" viewBox="0 0 14 8"><path d="M1 7l6-6 6 6" fill="none" stroke="#fff" stroke-width="1.300"/></svg>
      <svg class="ml-[9px] h-[12px] w-[17px]" viewBox="0 0 17 12"><path d="M4.500 3.500h10v7h-10z" fill="none" stroke="#fff"/><path d="M6 5h7v4H6zM15 5h1.500v4H15zM1 0v3h4V0M3 3v5h2" fill="#fff" stroke="#fff" stroke-width=".7"/></svg>
      <svg class="ml-[9px] size-[14px]" viewBox="0 0 14 14"><g fill="none" stroke="#ddd"><path d="M1 13C1 6 6 1 13 1M4 13c0-5 4-9 9-9M7 13c0-3 3-6 6-6M9.500 13q0-3.500 3.500-3.500"/></g><circle cx="12" cy="12" r="1.200" fill="#fff"/></svg>
      <svg class="ml-[7px] h-[14px] w-[17px]" viewBox="0 0 17 14"><path d="M.5 4.500h2.500L6.500 1v12L3 9.500H.5zM9 4.500q2 2.500 0 5M11.500 2.500q3.500 4.500 0 9M14 1q5 6 0 12" fill="none" stroke="#fff"/></svg>
      <svg class="ml-[8px] h-[13px] w-[23px]" viewBox="0 0 23 13"><path d="M.5.5h22v12H.5z" fill="none" stroke="#fff"/><path d="M3 3.500h17M3 6.500h17" stroke="#fff" stroke-dasharray="2 1"/><path d="M3 9.500h2m1 0h11m1 0h2" stroke="#fff"/></svg>
      <span class="ml-[10px] text-[13px]">中</span>
      <svg class="ml-[14px] size-4" viewBox="0 0 16 16"><rect x="1" y="1" width="14" height="14" rx="2.500" fill="#f04e23" transform="rotate(-8 8 8)"/><path d="M12 4.500C7 3 4.500 4 4.500 5.800S11.500 8 11.500 10 8 12.500 4 11" fill="none" stroke="#fff" stroke-width="2"/></svg>
      <time class="ml-[6px] w-[82px] text-center leading-[18px]">13:26<br>2017/10/15</time>
      <button aria-label="通知" class="ml-[6px] mr-[12px] w-[26px]"><svg class="h-[26px] w-[26px]" viewBox="0 0 26 26"><path d="M1 2h16v13H8l-4 3v-3H1z" fill="#fff"/><path d="M3 5.500h12M3 8.500h12M3 11.500h8" stroke="#000"/><circle cx="17" cy="17" r="8" fill="#3a3a3a" stroke="#888"/><text x="17" y="21.500" font-size="12" font-weight="bold" fill="#fff" text-anchor="middle">2</text></svg></button>
      <span class="mr-1 h-10 w-px bg-[#555]"></span>
    </div>
  </div>

  <!-- property editor window -->
  <section class="absolute left-[437px] top-[84px] flex h-[552px] w-[491px] flex-col border border-t-0 border-[#9a9a9a] bg-white pr-px font-['Noto_Sans_CJK_SC',sans-serif] shadow-[3px_3px_6px_rgba(0,0,0,0.35)]">
    <div class="flex h-[30px] items-center pl-[7px] text-[#999]">属性编辑器<button aria-label="关闭" class="-mr-px ml-auto h-[18px] w-[18px] bg-[#e3e3e3] text-[10px] text-white">x</button></div>
    <table class="w-full table-fixed border-collapse border-t border-[#a0a0a0] leading-3">
      <colgroup><col class="w-[21px]"><col class="w-[121px]"><col></colgroup>
      <thead><tr class="h-[24px] bg-linear-to-b from-white to-[#f0f0f0] [&>th]:border-r [&>th]:border-b [&>th]:border-[#b4b4b4] [&>th]:font-normal"><th></th><th>属性名称</th><th class="bg-linear-to-b from-[#f9d999] to-[#f0be60] text-[#5a0050]">属性值</th></tr></thead>
      <tbody><tr class="h-[19px] [&>td]:border-r [&>td]:border-b [&>td]:border-[#b4b4b4]"><td class="text-center text-[11px]">1</td><td class="pl-5 text-[#0000ee]">名称</td><td class="pl-[2px]"><input aria-label="名称" value="FBZJ-12" class="block w-full font-['DejaVu_Sans_Mono'] text-[10px]"></td></tr></tbody>
    </table>
  </section>

  <!-- node settings dialog -->
  <section role="dialog" aria-labelledby="dlgTitle" class="absolute left-[251px] top-[157px] flex h-[448px] w-[864px] flex-col border border-[#9b9b9b] bg-[#f0f0f0] shadow-[3px_4px_9px_rgba(0,0,0,0.4)]">
    <div class="flex h-[30px] shrink-0 items-center bg-white pl-2 text-[#999]">
      <svg class="mr-[5px] size-4"><use href="#app"/></svg><h2 id="dlgTitle">节点设置</h2>
      <div class="ml-auto flex gap-9 pr-[18px]">
        <button aria-label="最小化"><svg class="size-[10px]" viewBox="0 0 10 10"><path d="M0 5.500h10" stroke="#777"/></svg></button>
        <button aria-label="最大化"><svg class="size-[10px]" viewBox="0 0 10 10"><path d="M.5.5h9v9h-9z" fill="none" stroke="#777"/></svg></button>
        <button aria-label="关闭"><svg class="size-[10px]" viewBox="0 0 10 10"><path d="M0 0l10 10M10 0L0 10" stroke="#777"/></svg></button>
      </div>
    </div>
    <div class="mx-[3px] mt-[3px] flex h-[369px] shrink-0 justify-between overflow-hidden border border-[#a0a0a0] bg-white pr-px font-['Noto_Sans_CJK_SC',sans-serif]">
      <table class="h-fit w-[543px] table-fixed border-collapse leading-3">
        <colgroup><col class="w-[21px]"><col class="w-[261px]"><col class="w-[261px]"></colgroup>
        <thead><tr class="h-[19px] bg-linear-to-b from-white to-[#f0f0f0] [&>th]:border-r [&>th]:border-b [&>th]:border-[#bcbcbc] [&>th]:font-normal"><th></th><th>名称</th><th class="bg-linear-to-b from-[#f9d999] to-[#f0be60] text-[#5a0050]">节点图</th></tr></thead>
        <tbody id="nodes"></tbody>
      </table>
      <div class="mr-[2px] flex w-[15px] flex-col items-center bg-[#f0f0f0]">
        <svg class="my-[6px] h-[7px] w-[9px] shrink-0" viewBox="0 0 9 7"><path d="M1 6l3.500-4L8 6" fill="none" stroke="#555" stroke-width="2"/></svg>
        <div class="h-[200px] w-full bg-[#cdcdcd]"></div>
      </div>
    </div>
    <div class="flex flex-1 items-start justify-end gap-[15px] pr-4 pt-[11px] font-['Noto_Sans_CJK_SC',sans-serif]">
      <button class="h-[23px] w-[72px] border-2 border-[#0078d7] bg-[#e1e1e1] leading-4">确定</button>
      <button class="h-[23px] w-[72px] border border-[#adadad] bg-[#e1e1e1] leading-4">取消</button>
    </div>
  </section>

  <!-- node preview window -->
  <section class="absolute left-[801px] top-[250px] flex h-[310px] w-[310px] flex-col border border-[#222] bg-linear-to-b from-[#98b3d1] to-[#b9d0ea] to-[32px] px-[7px] font-['Noto_Sans_CJK_SC',sans-serif] shadow-[inset_-1px_-1px_0_#4fd0ee]">
    <h2 class="flex h-[30px] shrink-0 items-end pb-1">节点设置示意图</h2>
    <div class="relative h-[191px] border-2 border-b-[#8c8c8c] border-l-white border-r-[#8c8c8c] border-t-white bg-black">
      <svg class="size-full" viewBox="0 0 290 187">
        <g fill="#fff" font-size="11"><text x="80" y="22">高跨上部钢筋伸入低跨板内</text><text x="80" y="40">低跨上部钢筋伸入高跨板内</text></g>
        <g fill="none" stroke="#fff" shape-rendering="crispEdges">
          <path d="M126 51.500h45M131.500 51.500V90M167.500 51.500V90" stroke-dasharray="4 3"/>
          <path d="M144 51l5-5 2 9 3-3M66.500 85v60M66 90.500h101.500v15H227M227.500 96v52M66 141.500h162M170.500 104v23M166 105h7M167 127h7M167 102l6 6M147 80h20M143 84l5-5v5M164 84l4-5v5"/>
          <path d="M60 118h4l3-4M66 115l6 3-5 2-1 3-3-1M222 124l4-1 1-3M227 122l5 3-5 1v3"/>
        </g>
        <g fill="none" stroke="#f00" stroke-width="2" shape-rendering="crispEdges"><path d="M66 93h98v33M146 107h81M66 138h161"/></g>
        <text x="0" y="0" transform="translate(186 126) rotate(-90)" fill="#0f0" font-size="10" font-family="DejaVu Sans Mono">laE</text>
        <text x="128" y="168" fill="#0ff" font-size="14">节点一</text>
        <path d="M123 172.500h49" stroke="#0ff" stroke-width="3"/>
      </svg>
      <input aria-label="长度" value="1600" class="absolute left-[147px] top-[66px] h-[14px] w-[35px] bg-white text-[11px] text-black">
    </div>
    <div class="mb-2 mt-px flex flex-1 border border-b-[#999] border-l-white border-r-[#999] border-t-white bg-[#f0f0f0] pt-[13px] leading-3 [&_span]:font-['DejaVu_Sans_Mono'] [&_span]:text-[10px]">
      <p class="w-[65px] shrink-0 whitespace-nowrap">提示信息：</p>
      <p class="whitespace-nowrap">规范计算：来源<span>16G101-3</span>第<span>92</span>页“变截面<br>部位钢筋构造”节点。高板上部钢筋伸入<br>低板内<span>lae</span>；低板上部钢筋伸入高板内<span>lae</span><br>。</p>
    </div>
  </section>

  <!-- red marker round the selected row -->
  <svg class="pointer-events-none absolute left-[227px] top-[320px] h-[60px] w-[606px]" viewBox="0 0 606 60"><ellipse cx="303" cy="30" rx="300" ry="27" fill="none" stroke="#f00" stroke-width="3"/></svg>

  <!-- speed ball -->
  <div class="absolute -top-[26px] left-[886px] flex size-[45px] items-end justify-center rounded-full border-2 border-[#b8c8b8] bg-linear-to-b from-[#5dcf6a] to-[#2fb850] pb-[3px] text-[12px] font-bold text-white shadow-md">71</div>

  <!-- input method bar -->
  <div class="absolute left-[993px] top-[3px] flex h-[24px] w-[181px] items-center gap-[10px] border border-[#a9c3e0] bg-[#fbfdff] pl-[26px] text-[#1a6fc4]">
    <svg class="absolute -left-[5px] -top-[4px] size-[30px]" viewBox="0 0 30 30"><rect x="3" y="3" width="24" height="24" rx="4" fill="#f0501e" transform="rotate(-8 15 15)"/><path d="M22 8C14 5 8 7 8 11s14 3 14 8-8 5-15 3" fill="none" stroke="#fff" stroke-width="3.500"/></svg>
    <span class="ml-[3px] text-[14px] font-bold">中</span>
    <svg class="size-[14px]" viewBox="0 0 14 14"><circle cx="4" cy="4" r="2" fill="none" stroke="#1a6fc4" stroke-width="1.300"/><path d="M9 8h3v2q0 2-2.500 3" fill="none" stroke="#1a6fc4" stroke-width="2"/></svg>
    <svg class="h-[16px] w-[12px] shrink-0" viewBox="0 0 12 16"><rect x="3" y="0" width="6" height="10" rx="3" fill="#1a6fc4"/><path d="M1 6q0 5.500 5 5.500t5-5.500M6 11v3M3 15h6" fill="none" stroke="#1a6fc4" stroke-width="1.600"/></svg>
    <svg class="h-[12px] w-[16px] shrink-0" viewBox="0 0 16 12"><rect x=".7" y=".7" width="14.600" height="10.600" fill="none" stroke="#1a6fc4" stroke-width="1.400"/><path d="M3 3.500h10M3 6h10" stroke="#1a6fc4" stroke-width="1.300" stroke-dasharray="1.500 1"/><path d="M4 9h8" stroke="#1a6fc4"/></svg>
    <svg class="size-[15px] shrink-0" viewBox="0 0 16 16"><circle cx="7" cy="4" r="3.500" fill="#a9bdd4"/><path d="M0 15q0-7 7-7t7 7z" fill="#a9bdd4"/><rect x="6" y="8" width="10" height="7" fill="#8ba4c0" stroke="#fff"/></svg>
    <svg class="-ml-1 size-[15px] shrink-0" viewBox="0 0 16 16"><path d="M5 1q3 3 6 0l5 3-2 4-2-1v9H4V7L2 8 0 4z" fill="#1a6fc4"/></svg>
    <svg class="-ml-1 size-[15px] shrink-0" viewBox="0 0 16 16"><path d="M2 14l7-7" stroke="#1a6fc4" stroke-width="3" stroke-linecap="round"/><path d="M15 4a4.500 4.500 0 1 1-4-3.500L9.500 3l1 2.500 2.500.5z" fill="#1a6fc4"/></svg>
  </div>
</div>

<script>
  // [kind, label, shortcut, icon]; kind: o = open folder, x = closed folder, c = child, l = last child
  const tree = [
    ['o','梁'],['c','梁','(L)','t-beam'],['l','圈梁','(E)','t-ring'],
    ['o','板'],['c','现浇板','(B)','t-slab'],['c','螺旋板','(B)','t-spiral'],['c','柱帽','(V)','t-cap'],['c','板洞','(N)','t-hole'],['c','板受力筋','(S)','t-bars'],['c','板负筋','(F)','t-neg'],['l','楼层板带','(H)','t-band'],
    ['o','基础'],['c','基础梁','(F)','t-fbeam'],['c','筏板基础','(M)','t-raft'],['c','集水坑','(K)','t-pit'],['c','柱墩','(Y)','t-pier'],['c','筏板主筋','(R)','t-main'],['c','筏板负筋','(X)','t-neg'],['c','独立基础','(P)','t-iso'],['c','条形基础','(T)','t-fbeam'],['c','桩承台','(V)','t-pcap'],['c','承台梁','(F)','t-fbeam'],['c','桩','(U)','t-pile'],['l','基础板带','(W)','t-band'],
    ['x','其它'],['o','自定义'],['c','自定义点','','t-point'],['c','自定义线','(X)','t-line'],['c','自定义面','','t-hatch'],['l','尺寸标注','(W)','t-dim'],
    ['o','识别']
  ];
  const badge = t => `<svg class="size-4 shrink-0"><use href="#book"/></svg><b class="mb-1 bg-[#ffe000] text-[9px] leading-[9px]">${t}</b>`;
  document.getElementById('tree').innerHTML = tree.map(([k, label, key, icon]) => {
    if (k === 'o' || k === 'x') {
      const arrow = k === 'o' ? 'M1 2.500l4 4 4-4' : 'M3 1l4 4-4 4';
      return `<li class="flex h-4 items-center whitespace-nowrap pl-[6px]"><svg class="size-[10px] shrink-0" viewBox="0 0 10 10"><path d="${arrow}" fill="none" stroke="#444" stroke-width="1.500"/></svg><i class="ml-[3px] mr-px w-[3px] border-b border-dotted border-[#808080]"></i><svg class="mr-1 size-4 shrink-0"><use href="#${k === 'o' ? 'fopen' : 'fclosed'}"/></svg><button>${label}</button>${label === '识别' ? badge('NEW') : ''}</li>`;
    }
    const low = k === 'c' ? '<i class="h-2 border-l border-dotted border-[#808080]"></i>' : '';
    const sel = label === '筏板主筋' ? 'flex items-center bg-[#d9d9d9] pr-1' : 'flex items-center';
    return `<li class="flex h-4 items-center whitespace-nowrap pl-3"><i class="h-4 w-[19px] shrink-0 border-l border-dotted border-[#808080]"></i><span class="flex h-4 w-[11px] shrink-0 flex-col"><i class="h-2 border-b border-l border-dotted border-[#808080]"></i>${low}</span><button class="${sel}"><svg class="mr-1 size-4 shrink-0"><use href="#${icon}"/></svg>${label}<span class="font-['DejaVu_Sans_Mono'] text-[10px]">${key}</span></button>${label === '自定义线' ? badge('N') : ''}</li>`;
  }).join('');

  const nodes = [
    ['筏形基础端部外伸上部钢筋构造','节点1'],['筏形基础端部外伸下部钢筋构造','节点1'],['筏形基础端部中间层钢筋构造','节点1'],
    ['筏形基础端部无外伸上部钢筋遇梁构造','节点1'],['筏形基础端部无外伸下部钢筋遇梁构造','节点1'],['筏形基础端部无外伸上部钢筋遇墙构造','节点1'],
    ['筏形基础端部无外伸下部钢筋遇墙构造','节点1'],['平板式筏形基础顶部高差节点','节点1'],['梁板式筏形基础顶部高差节点','节点1'],
    ['筏形基础底部高差节点','节点2'],['筏形基础钢筋锚入相邻筏板构造','节点1'],['筏形基础钢筋遇承台/独基/承台梁/基础联系梁/','节点2'],
    ['筏形/承台基础遇集水坑节点','节点1'],['筏形基础钢筋遇柱墩构造','节点1'],['筏形基础斜交阳角构造','节点1'],['筏形基础斜交阴角构造','节点1'],
    ['筏板马凳筋配置方式','矩形布置'],['筏板拉筋配置方式','矩形布置'],['是否支持按剪力墙计算侧钢筋','节点1']
  ];
  document.getElementById('nodes').innerHTML = nodes.map(([name, val], i) => {
    const tone = i === 16 || i === 17 ? 'h-[19px] whitespace-nowrap text-[#8a8a8a]' : 'h-[19px] whitespace-nowrap';
    const num = i === 7 ? 'border-r border-b border-[#bcbcbc] bg-[#ffd28c] text-center text-[11px] text-[#5a0050]' : 'border-r border-b border-[#bcbcbc] bg-linear-to-r from-white to-[#f0f0f0] text-center text-[11px] text-black';
    const cell = i === 7 ? 'border-r border-b border-[#bcbcbc] bg-[#d9eaf8] pl-[2px] outline-1 -outline-offset-1 outline-dotted outline-black' : 'border-r border-b border-[#bcbcbc] pl-[2px]';
    return `<tr class="${tone}"><td class="${num}">${i + 1}</td><td class="overflow-hidden border-r border-b border-[#bcbcbc] bg-[#ffffe1] pl-[2px]">${name}</td><td class="${cell}">${val}</td></tr>`;
  }).join('');
</script>
</body>
</html>
